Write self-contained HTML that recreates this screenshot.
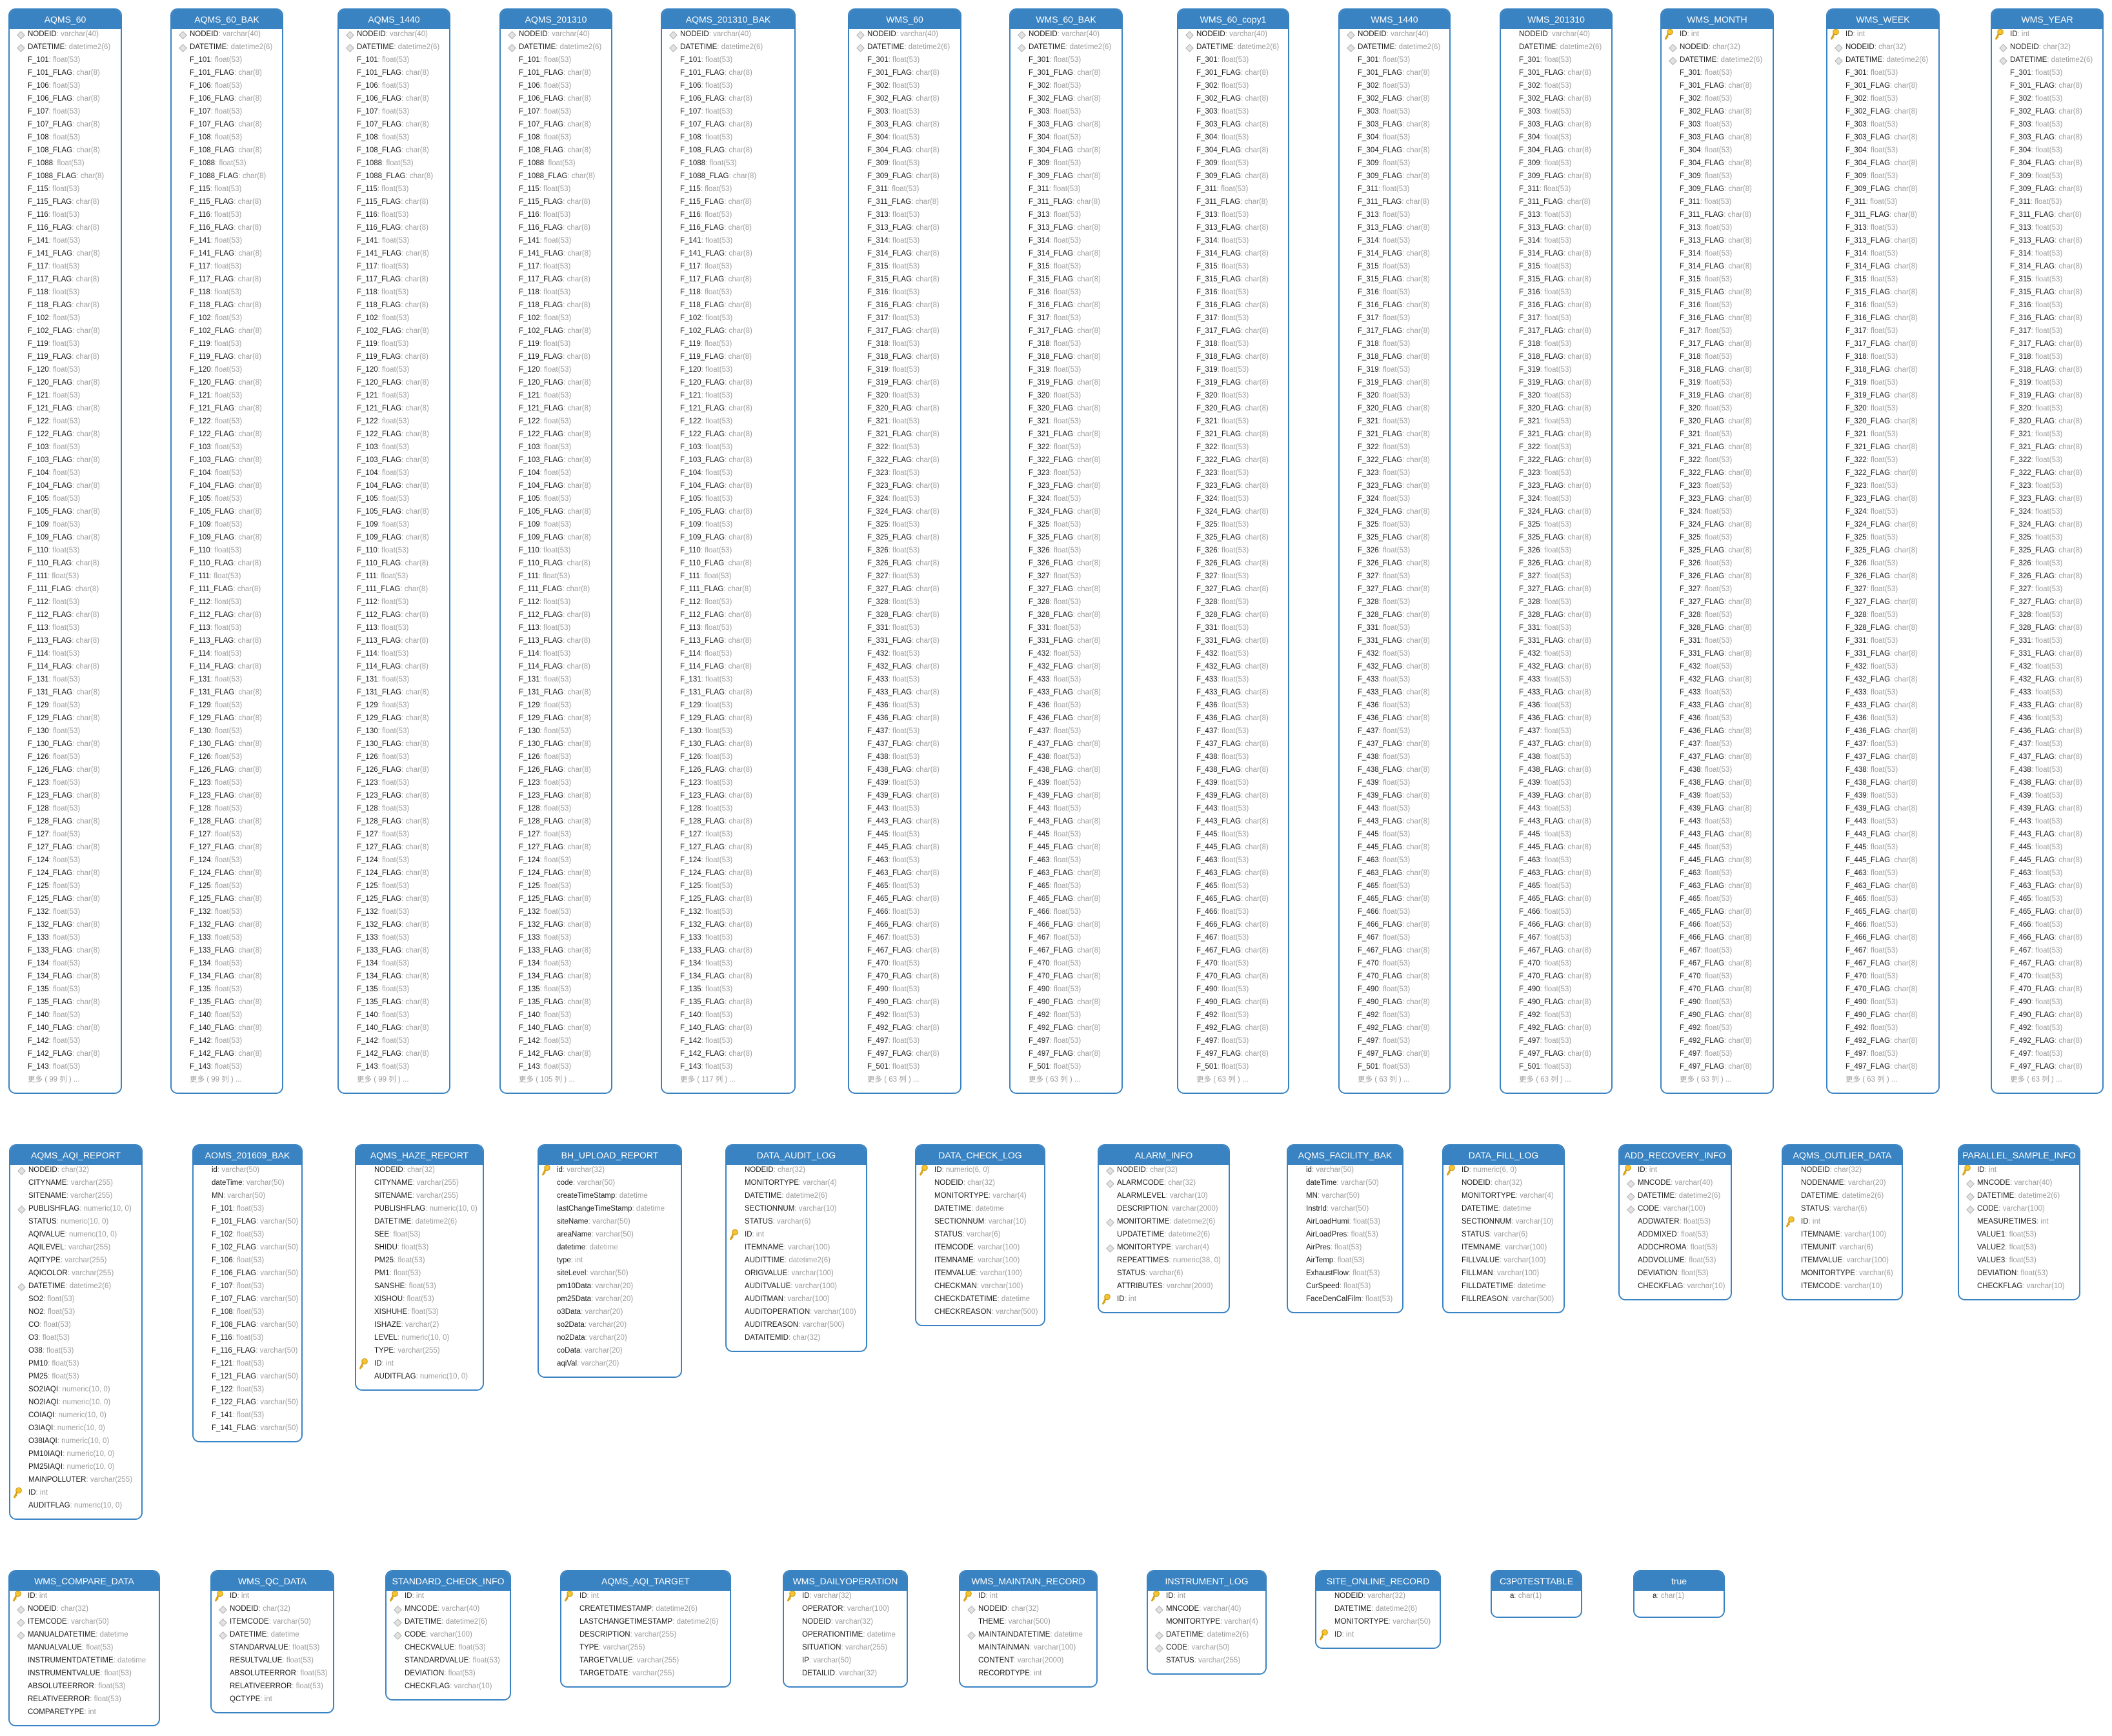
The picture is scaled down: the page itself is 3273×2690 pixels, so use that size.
<!DOCTYPE html>
<html><head><meta charset="utf-8"><style>
html,body{margin:0;padding:0;background:#fff;width:3273px;height:2690px;overflow:hidden;position:relative;font-family:"Liberation Sans","Noto Sans CJK SC",sans-serif}
.t{position:absolute;border:2px solid #3a83c2;border-radius:11px;background:#fff;overflow:hidden;box-sizing:border-box}
.h{height:30px;background:#3a83c2;color:#fff;font-size:14px;line-height:31px;text-align:center;white-space:nowrap}
.b{margin-top:-2px;padding-bottom:10px}
p{margin:0;height:20px;line-height:20px;padding-left:28px;white-space:nowrap;font-size:11.5px;color:#1a1a1a;position:relative}
em{font-style:normal;color:#9c9c9c}
p.m{color:#9c9c9c}
p.d::before{content:"";position:absolute;left:13px;top:7px;width:7px;height:7px;transform:rotate(45deg);border:1px solid #b0b0b0;background:#e2e2e2}
svg.k{position:absolute;left:4px;top:1px;width:14px;height:18px}
</style></head><body>

<div class="t" style="left:13px;top:13px;width:176px"><div class="h">AQMS_60</div><div class="b">
<p class=d>NODEID<em>: varchar(40)</em></p><p class=d>DATETIME<em>: datetime2(6)</em></p>
<p>F_101<em>: float(53)</em></p><p>F_101_FLAG<em>: char(8)</em></p><p>F_106<em>: float(53)</em></p><p>F_106_FLAG<em>: char(8)</em></p><p>F_107<em>: float(53)</em></p><p>F_107_FLAG<em>: char(8)</em></p><p>F_108<em>: float(53)</em></p><p>F_108_FLAG<em>: char(8)</em></p><p>F_1088<em>: float(53)</em></p><p>F_1088_FLAG<em>: char(8)</em></p><p>F_115<em>: float(53)</em></p><p>F_115_FLAG<em>: char(8)</em></p><p>F_116<em>: float(53)</em></p><p>F_116_FLAG<em>: char(8)</em></p><p>F_141<em>: float(53)</em></p><p>F_141_FLAG<em>: char(8)</em></p><p>F_117<em>: float(53)</em></p><p>F_117_FLAG<em>: char(8)</em></p><p>F_118<em>: float(53)</em></p><p>F_118_FLAG<em>: char(8)</em></p><p>F_102<em>: float(53)</em></p><p>F_102_FLAG<em>: char(8)</em></p><p>F_119<em>: float(53)</em></p><p>F_119_FLAG<em>: char(8)</em></p><p>F_120<em>: float(53)</em></p><p>F_120_FLAG<em>: char(8)</em></p><p>F_121<em>: float(53)</em></p><p>F_121_FLAG<em>: char(8)</em></p><p>F_122<em>: float(53)</em></p><p>F_122_FLAG<em>: char(8)</em></p><p>F_103<em>: float(53)</em></p><p>F_103_FLAG<em>: char(8)</em></p><p>F_104<em>: float(53)</em></p><p>F_104_FLAG<em>: char(8)</em></p><p>F_105<em>: float(53)</em></p><p>F_105_FLAG<em>: char(8)</em></p><p>F_109<em>: float(53)</em></p><p>F_109_FLAG<em>: char(8)</em></p><p>F_110<em>: float(53)</em></p><p>F_110_FLAG<em>: char(8)</em></p><p>F_111<em>: float(53)</em></p><p>F_111_FLAG<em>: char(8)</em></p><p>F_112<em>: float(53)</em></p><p>F_112_FLAG<em>: char(8)</em></p><p>F_113<em>: float(53)</em></p><p>F_113_FLAG<em>: char(8)</em></p><p>F_114<em>: float(53)</em></p><p>F_114_FLAG<em>: char(8)</em></p><p>F_131<em>: float(53)</em></p><p>F_131_FLAG<em>: char(8)</em></p><p>F_129<em>: float(53)</em></p><p>F_129_FLAG<em>: char(8)</em></p><p>F_130<em>: float(53)</em></p><p>F_130_FLAG<em>: char(8)</em></p><p>F_126<em>: float(53)</em></p><p>F_126_FLAG<em>: char(8)</em></p><p>F_123<em>: float(53)</em></p><p>F_123_FLAG<em>: char(8)</em></p><p>F_128<em>: float(53)</em></p><p>F_128_FLAG<em>: char(8)</em></p><p>F_127<em>: float(53)</em></p><p>F_127_FLAG<em>: char(8)</em></p><p>F_124<em>: float(53)</em></p><p>F_124_FLAG<em>: char(8)</em></p><p>F_125<em>: float(53)</em></p><p>F_125_FLAG<em>: char(8)</em></p><p>F_132<em>: float(53)</em></p><p>F_132_FLAG<em>: char(8)</em></p><p>F_133<em>: float(53)</em></p><p>F_133_FLAG<em>: char(8)</em></p><p>F_134<em>: float(53)</em></p><p>F_134_FLAG<em>: char(8)</em></p><p>F_135<em>: float(53)</em></p><p>F_135_FLAG<em>: char(8)</em></p><p>F_140<em>: float(53)</em></p><p>F_140_FLAG<em>: char(8)</em></p><p>F_142<em>: float(53)</em></p><p>F_142_FLAG<em>: char(8)</em></p><p>F_143<em>: float(53)</em></p>
<p class=m>更多 ( 99 列 ) ...</p></div></div>

<div class="t" style="left:264px;top:13px;width:175px"><div class="h">AQMS_60_BAK</div><div class="b">
<p class=d>NODEID<em>: varchar(40)</em></p><p class=d>DATETIME<em>: datetime2(6)</em></p>
<p>F_101<em>: float(53)</em></p><p>F_101_FLAG<em>: char(8)</em></p><p>F_106<em>: float(53)</em></p><p>F_106_FLAG<em>: char(8)</em></p><p>F_107<em>: float(53)</em></p><p>F_107_FLAG<em>: char(8)</em></p><p>F_108<em>: float(53)</em></p><p>F_108_FLAG<em>: char(8)</em></p><p>F_1088<em>: float(53)</em></p><p>F_1088_FLAG<em>: char(8)</em></p><p>F_115<em>: float(53)</em></p><p>F_115_FLAG<em>: char(8)</em></p><p>F_116<em>: float(53)</em></p><p>F_116_FLAG<em>: char(8)</em></p><p>F_141<em>: float(53)</em></p><p>F_141_FLAG<em>: char(8)</em></p><p>F_117<em>: float(53)</em></p><p>F_117_FLAG<em>: char(8)</em></p><p>F_118<em>: float(53)</em></p><p>F_118_FLAG<em>: char(8)</em></p><p>F_102<em>: float(53)</em></p><p>F_102_FLAG<em>: char(8)</em></p><p>F_119<em>: float(53)</em></p><p>F_119_FLAG<em>: char(8)</em></p><p>F_120<em>: float(53)</em></p><p>F_120_FLAG<em>: char(8)</em></p><p>F_121<em>: float(53)</em></p><p>F_121_FLAG<em>: char(8)</em></p><p>F_122<em>: float(53)</em></p><p>F_122_FLAG<em>: char(8)</em></p><p>F_103<em>: float(53)</em></p><p>F_103_FLAG<em>: char(8)</em></p><p>F_104<em>: float(53)</em></p><p>F_104_FLAG<em>: char(8)</em></p><p>F_105<em>: float(53)</em></p><p>F_105_FLAG<em>: char(8)</em></p><p>F_109<em>: float(53)</em></p><p>F_109_FLAG<em>: char(8)</em></p><p>F_110<em>: float(53)</em></p><p>F_110_FLAG<em>: char(8)</em></p><p>F_111<em>: float(53)</em></p><p>F_111_FLAG<em>: char(8)</em></p><p>F_112<em>: float(53)</em></p><p>F_112_FLAG<em>: char(8)</em></p><p>F_113<em>: float(53)</em></p><p>F_113_FLAG<em>: char(8)</em></p><p>F_114<em>: float(53)</em></p><p>F_114_FLAG<em>: char(8)</em></p><p>F_131<em>: float(53)</em></p><p>F_131_FLAG<em>: char(8)</em></p><p>F_129<em>: float(53)</em></p><p>F_129_FLAG<em>: char(8)</em></p><p>F_130<em>: float(53)</em></p><p>F_130_FLAG<em>: char(8)</em></p><p>F_126<em>: float(53)</em></p><p>F_126_FLAG<em>: char(8)</em></p><p>F_123<em>: float(53)</em></p><p>F_123_FLAG<em>: char(8)</em></p><p>F_128<em>: float(53)</em></p><p>F_128_FLAG<em>: char(8)</em></p><p>F_127<em>: float(53)</em></p><p>F_127_FLAG<em>: char(8)</em></p><p>F_124<em>: float(53)</em></p><p>F_124_FLAG<em>: char(8)</em></p><p>F_125<em>: float(53)</em></p><p>F_125_FLAG<em>: char(8)</em></p><p>F_132<em>: float(53)</em></p><p>F_132_FLAG<em>: char(8)</em></p><p>F_133<em>: float(53)</em></p><p>F_133_FLAG<em>: char(8)</em></p><p>F_134<em>: float(53)</em></p><p>F_134_FLAG<em>: char(8)</em></p><p>F_135<em>: float(53)</em></p><p>F_135_FLAG<em>: char(8)</em></p><p>F_140<em>: float(53)</em></p><p>F_140_FLAG<em>: char(8)</em></p><p>F_142<em>: float(53)</em></p><p>F_142_FLAG<em>: char(8)</em></p><p>F_143<em>: float(53)</em></p>
<p class=m>更多 ( 99 列 ) ...</p></div></div>

<div class="t" style="left:523px;top:13px;width:175px"><div class="h">AQMS_1440</div><div class="b">
<p class=d>NODEID<em>: varchar(40)</em></p><p class=d>DATETIME<em>: datetime2(6)</em></p>
<p>F_101<em>: float(53)</em></p><p>F_101_FLAG<em>: char(8)</em></p><p>F_106<em>: float(53)</em></p><p>F_106_FLAG<em>: char(8)</em></p><p>F_107<em>: float(53)</em></p><p>F_107_FLAG<em>: char(8)</em></p><p>F_108<em>: float(53)</em></p><p>F_108_FLAG<em>: char(8)</em></p><p>F_1088<em>: float(53)</em></p><p>F_1088_FLAG<em>: char(8)</em></p><p>F_115<em>: float(53)</em></p><p>F_115_FLAG<em>: char(8)</em></p><p>F_116<em>: float(53)</em></p><p>F_116_FLAG<em>: char(8)</em></p><p>F_141<em>: float(53)</em></p><p>F_141_FLAG<em>: char(8)</em></p><p>F_117<em>: float(53)</em></p><p>F_117_FLAG<em>: char(8)</em></p><p>F_118<em>: float(53)</em></p><p>F_118_FLAG<em>: char(8)</em></p><p>F_102<em>: float(53)</em></p><p>F_102_FLAG<em>: char(8)</em></p><p>F_119<em>: float(53)</em></p><p>F_119_FLAG<em>: char(8)</em></p><p>F_120<em>: float(53)</em></p><p>F_120_FLAG<em>: char(8)</em></p><p>F_121<em>: float(53)</em></p><p>F_121_FLAG<em>: char(8)</em></p><p>F_122<em>: float(53)</em></p><p>F_122_FLAG<em>: char(8)</em></p><p>F_103<em>: float(53)</em></p><p>F_103_FLAG<em>: char(8)</em></p><p>F_104<em>: float(53)</em></p><p>F_104_FLAG<em>: char(8)</em></p><p>F_105<em>: float(53)</em></p><p>F_105_FLAG<em>: char(8)</em></p><p>F_109<em>: float(53)</em></p><p>F_109_FLAG<em>: char(8)</em></p><p>F_110<em>: float(53)</em></p><p>F_110_FLAG<em>: char(8)</em></p><p>F_111<em>: float(53)</em></p><p>F_111_FLAG<em>: char(8)</em></p><p>F_112<em>: float(53)</em></p><p>F_112_FLAG<em>: char(8)</em></p><p>F_113<em>: float(53)</em></p><p>F_113_FLAG<em>: char(8)</em></p><p>F_114<em>: float(53)</em></p><p>F_114_FLAG<em>: char(8)</em></p><p>F_131<em>: float(53)</em></p><p>F_131_FLAG<em>: char(8)</em></p><p>F_129<em>: float(53)</em></p><p>F_129_FLAG<em>: char(8)</em></p><p>F_130<em>: float(53)</em></p><p>F_130_FLAG<em>: char(8)</em></p><p>F_126<em>: float(53)</em></p><p>F_126_FLAG<em>: char(8)</em></p><p>F_123<em>: float(53)</em></p><p>F_123_FLAG<em>: char(8)</em></p><p>F_128<em>: float(53)</em></p><p>F_128_FLAG<em>: char(8)</em></p><p>F_127<em>: float(53)</em></p><p>F_127_FLAG<em>: char(8)</em></p><p>F_124<em>: float(53)</em></p><p>F_124_FLAG<em>: char(8)</em></p><p>F_125<em>: float(53)</em></p><p>F_125_FLAG<em>: char(8)</em></p><p>F_132<em>: float(53)</em></p><p>F_132_FLAG<em>: char(8)</em></p><p>F_133<em>: float(53)</em></p><p>F_133_FLAG<em>: char(8)</em></p><p>F_134<em>: float(53)</em></p><p>F_134_FLAG<em>: char(8)</em></p><p>F_135<em>: float(53)</em></p><p>F_135_FLAG<em>: char(8)</em></p><p>F_140<em>: float(53)</em></p><p>F_140_FLAG<em>: char(8)</em></p><p>F_142<em>: float(53)</em></p><p>F_142_FLAG<em>: char(8)</em></p><p>F_143<em>: float(53)</em></p>
<p class=m>更多 ( 99 列 ) ...</p></div></div>

<div class="t" style="left:774px;top:13px;width:175px"><div class="h">AQMS_201310</div><div class="b">
<p class=d>NODEID<em>: varchar(40)</em></p><p class=d>DATETIME<em>: datetime2(6)</em></p>
<p>F_101<em>: float(53)</em></p><p>F_101_FLAG<em>: char(8)</em></p><p>F_106<em>: float(53)</em></p><p>F_106_FLAG<em>: char(8)</em></p><p>F_107<em>: float(53)</em></p><p>F_107_FLAG<em>: char(8)</em></p><p>F_108<em>: float(53)</em></p><p>F_108_FLAG<em>: char(8)</em></p><p>F_1088<em>: float(53)</em></p><p>F_1088_FLAG<em>: char(8)</em></p><p>F_115<em>: float(53)</em></p><p>F_115_FLAG<em>: char(8)</em></p><p>F_116<em>: float(53)</em></p><p>F_116_FLAG<em>: char(8)</em></p><p>F_141<em>: float(53)</em></p><p>F_141_FLAG<em>: char(8)</em></p><p>F_117<em>: float(53)</em></p><p>F_117_FLAG<em>: char(8)</em></p><p>F_118<em>: float(53)</em></p><p>F_118_FLAG<em>: char(8)</em></p><p>F_102<em>: float(53)</em></p><p>F_102_FLAG<em>: char(8)</em></p><p>F_119<em>: float(53)</em></p><p>F_119_FLAG<em>: char(8)</em></p><p>F_120<em>: float(53)</em></p><p>F_120_FLAG<em>: char(8)</em></p><p>F_121<em>: float(53)</em></p><p>F_121_FLAG<em>: char(8)</em></p><p>F_122<em>: float(53)</em></p><p>F_122_FLAG<em>: char(8)</em></p><p>F_103<em>: float(53)</em></p><p>F_103_FLAG<em>: char(8)</em></p><p>F_104<em>: float(53)</em></p><p>F_104_FLAG<em>: char(8)</em></p><p>F_105<em>: float(53)</em></p><p>F_105_FLAG<em>: char(8)</em></p><p>F_109<em>: float(53)</em></p><p>F_109_FLAG<em>: char(8)</em></p><p>F_110<em>: float(53)</em></p><p>F_110_FLAG<em>: char(8)</em></p><p>F_111<em>: float(53)</em></p><p>F_111_FLAG<em>: char(8)</em></p><p>F_112<em>: float(53)</em></p><p>F_112_FLAG<em>: char(8)</em></p><p>F_113<em>: float(53)</em></p><p>F_113_FLAG<em>: char(8)</em></p><p>F_114<em>: float(53)</em></p><p>F_114_FLAG<em>: char(8)</em></p><p>F_131<em>: float(53)</em></p><p>F_131_FLAG<em>: char(8)</em></p><p>F_129<em>: float(53)</em></p><p>F_129_FLAG<em>: char(8)</em></p><p>F_130<em>: float(53)</em></p><p>F_130_FLAG<em>: char(8)</em></p><p>F_126<em>: float(53)</em></p><p>F_126_FLAG<em>: char(8)</em></p><p>F_123<em>: float(53)</em></p><p>F_123_FLAG<em>: char(8)</em></p><p>F_128<em>: float(53)</em></p><p>F_128_FLAG<em>: char(8)</em></p><p>F_127<em>: float(53)</em></p><p>F_127_FLAG<em>: char(8)</em></p><p>F_124<em>: float(53)</em></p><p>F_124_FLAG<em>: char(8)</em></p><p>F_125<em>: float(53)</em></p><p>F_125_FLAG<em>: char(8)</em></p><p>F_132<em>: float(53)</em></p><p>F_132_FLAG<em>: char(8)</em></p><p>F_133<em>: float(53)</em></p><p>F_133_FLAG<em>: char(8)</em></p><p>F_134<em>: float(53)</em></p><p>F_134_FLAG<em>: char(8)</em></p><p>F_135<em>: float(53)</em></p><p>F_135_FLAG<em>: char(8)</em></p><p>F_140<em>: float(53)</em></p><p>F_140_FLAG<em>: char(8)</em></p><p>F_142<em>: float(53)</em></p><p>F_142_FLAG<em>: char(8)</em></p><p>F_143<em>: float(53)</em></p>
<p class=m>更多 ( 105 列 ) ...</p></div></div>

<div class="t" style="left:1024px;top:13px;width:209px"><div class="h">AQMS_201310_BAK</div><div class="b">
<p class=d>NODEID<em>: varchar(40)</em></p><p class=d>DATETIME<em>: datetime2(6)</em></p>
<p>F_101<em>: float(53)</em></p><p>F_101_FLAG<em>: char(8)</em></p><p>F_106<em>: float(53)</em></p><p>F_106_FLAG<em>: char(8)</em></p><p>F_107<em>: float(53)</em></p><p>F_107_FLAG<em>: char(8)</em></p><p>F_108<em>: float(53)</em></p><p>F_108_FLAG<em>: char(8)</em></p><p>F_1088<em>: float(53)</em></p><p>F_1088_FLAG<em>: char(8)</em></p><p>F_115<em>: float(53)</em></p><p>F_115_FLAG<em>: char(8)</em></p><p>F_116<em>: float(53)</em></p><p>F_116_FLAG<em>: char(8)</em></p><p>F_141<em>: float(53)</em></p><p>F_141_FLAG<em>: char(8)</em></p><p>F_117<em>: float(53)</em></p><p>F_117_FLAG<em>: char(8)</em></p><p>F_118<em>: float(53)</em></p><p>F_118_FLAG<em>: char(8)</em></p><p>F_102<em>: float(53)</em></p><p>F_102_FLAG<em>: char(8)</em></p><p>F_119<em>: float(53)</em></p><p>F_119_FLAG<em>: char(8)</em></p><p>F_120<em>: float(53)</em></p><p>F_120_FLAG<em>: char(8)</em></p><p>F_121<em>: float(53)</em></p><p>F_121_FLAG<em>: char(8)</em></p><p>F_122<em>: float(53)</em></p><p>F_122_FLAG<em>: char(8)</em></p><p>F_103<em>: float(53)</em></p><p>F_103_FLAG<em>: char(8)</em></p><p>F_104<em>: float(53)</em></p><p>F_104_FLAG<em>: char(8)</em></p><p>F_105<em>: float(53)</em></p><p>F_105_FLAG<em>: char(8)</em></p><p>F_109<em>: float(53)</em></p><p>F_109_FLAG<em>: char(8)</em></p><p>F_110<em>: float(53)</em></p><p>F_110_FLAG<em>: char(8)</em></p><p>F_111<em>: float(53)</em></p><p>F_111_FLAG<em>: char(8)</em></p><p>F_112<em>: float(53)</em></p><p>F_112_FLAG<em>: char(8)</em></p><p>F_113<em>: float(53)</em></p><p>F_113_FLAG<em>: char(8)</em></p><p>F_114<em>: float(53)</em></p><p>F_114_FLAG<em>: char(8)</em></p><p>F_131<em>: float(53)</em></p><p>F_131_FLAG<em>: char(8)</em></p><p>F_129<em>: float(53)</em></p><p>F_129_FLAG<em>: char(8)</em></p><p>F_130<em>: float(53)</em></p><p>F_130_FLAG<em>: char(8)</em></p><p>F_126<em>: float(53)</em></p><p>F_126_FLAG<em>: char(8)</em></p><p>F_123<em>: float(53)</em></p><p>F_123_FLAG<em>: char(8)</em></p><p>F_128<em>: float(53)</em></p><p>F_128_FLAG<em>: char(8)</em></p><p>F_127<em>: float(53)</em></p><p>F_127_FLAG<em>: char(8)</em></p><p>F_124<em>: float(53)</em></p><p>F_124_FLAG<em>: char(8)</em></p><p>F_125<em>: float(53)</em></p><p>F_125_FLAG<em>: char(8)</em></p><p>F_132<em>: float(53)</em></p><p>F_132_FLAG<em>: char(8)</em></p><p>F_133<em>: float(53)</em></p><p>F_133_FLAG<em>: char(8)</em></p><p>F_134<em>: float(53)</em></p><p>F_134_FLAG<em>: char(8)</em></p><p>F_135<em>: float(53)</em></p><p>F_135_FLAG<em>: char(8)</em></p><p>F_140<em>: float(53)</em></p><p>F_140_FLAG<em>: char(8)</em></p><p>F_142<em>: float(53)</em></p><p>F_142_FLAG<em>: char(8)</em></p><p>F_143<em>: float(53)</em></p>
<p class=m>更多 ( 117 列 ) ...</p></div></div>

<div class="t" style="left:1314px;top:13px;width:176px"><div class="h">WMS_60</div><div class="b">
<p class=d>NODEID<em>: varchar(40)</em></p><p class=d>DATETIME<em>: datetime2(6)</em></p>
<p>F_301<em>: float(53)</em></p><p>F_301_FLAG<em>: char(8)</em></p><p>F_302<em>: float(53)</em></p><p>F_302_FLAG<em>: char(8)</em></p><p>F_303<em>: float(53)</em></p><p>F_303_FLAG<em>: char(8)</em></p><p>F_304<em>: float(53)</em></p><p>F_304_FLAG<em>: char(8)</em></p><p>F_309<em>: float(53)</em></p><p>F_309_FLAG<em>: char(8)</em></p><p>F_311<em>: float(53)</em></p><p>F_311_FLAG<em>: char(8)</em></p><p>F_313<em>: float(53)</em></p><p>F_313_FLAG<em>: char(8)</em></p><p>F_314<em>: float(53)</em></p><p>F_314_FLAG<em>: char(8)</em></p><p>F_315<em>: float(53)</em></p><p>F_315_FLAG<em>: char(8)</em></p><p>F_316<em>: float(53)</em></p><p>F_316_FLAG<em>: char(8)</em></p><p>F_317<em>: float(53)</em></p><p>F_317_FLAG<em>: char(8)</em></p><p>F_318<em>: float(53)</em></p><p>F_318_FLAG<em>: char(8)</em></p><p>F_319<em>: float(53)</em></p><p>F_319_FLAG<em>: char(8)</em></p><p>F_320<em>: float(53)</em></p><p>F_320_FLAG<em>: char(8)</em></p><p>F_321<em>: float(53)</em></p><p>F_321_FLAG<em>: char(8)</em></p><p>F_322<em>: float(53)</em></p><p>F_322_FLAG<em>: char(8)</em></p><p>F_323<em>: float(53)</em></p><p>F_323_FLAG<em>: char(8)</em></p><p>F_324<em>: float(53)</em></p><p>F_324_FLAG<em>: char(8)</em></p><p>F_325<em>: float(53)</em></p><p>F_325_FLAG<em>: char(8)</em></p><p>F_326<em>: float(53)</em></p><p>F_326_FLAG<em>: char(8)</em></p><p>F_327<em>: float(53)</em></p><p>F_327_FLAG<em>: char(8)</em></p><p>F_328<em>: float(53)</em></p><p>F_328_FLAG<em>: char(8)</em></p><p>F_331<em>: float(53)</em></p><p>F_331_FLAG<em>: char(8)</em></p><p>F_432<em>: float(53)</em></p><p>F_432_FLAG<em>: char(8)</em></p><p>F_433<em>: float(53)</em></p><p>F_433_FLAG<em>: char(8)</em></p><p>F_436<em>: float(53)</em></p><p>F_436_FLAG<em>: char(8)</em></p><p>F_437<em>: float(53)</em></p><p>F_437_FLAG<em>: char(8)</em></p><p>F_438<em>: float(53)</em></p><p>F_438_FLAG<em>: char(8)</em></p><p>F_439<em>: float(53)</em></p><p>F_439_FLAG<em>: char(8)</em></p><p>F_443<em>: float(53)</em></p><p>F_443_FLAG<em>: char(8)</em></p><p>F_445<em>: float(53)</em></p><p>F_445_FLAG<em>: char(8)</em></p><p>F_463<em>: float(53)</em></p><p>F_463_FLAG<em>: char(8)</em></p><p>F_465<em>: float(53)</em></p><p>F_465_FLAG<em>: char(8)</em></p><p>F_466<em>: float(53)</em></p><p>F_466_FLAG<em>: char(8)</em></p><p>F_467<em>: float(53)</em></p><p>F_467_FLAG<em>: char(8)</em></p><p>F_470<em>: float(53)</em></p><p>F_470_FLAG<em>: char(8)</em></p><p>F_490<em>: float(53)</em></p><p>F_490_FLAG<em>: char(8)</em></p><p>F_492<em>: float(53)</em></p><p>F_492_FLAG<em>: char(8)</em></p><p>F_497<em>: float(53)</em></p><p>F_497_FLAG<em>: char(8)</em></p><p>F_501<em>: float(53)</em></p>
<p class=m>更多 ( 63 列 ) ...</p></div></div>

<div class="t" style="left:1564px;top:13px;width:176px"><div class="h">WMS_60_BAK</div><div class="b">
<p class=d>NODEID<em>: varchar(40)</em></p><p class=d>DATETIME<em>: datetime2(6)</em></p>
<p>F_301<em>: float(53)</em></p><p>F_301_FLAG<em>: char(8)</em></p><p>F_302<em>: float(53)</em></p><p>F_302_FLAG<em>: char(8)</em></p><p>F_303<em>: float(53)</em></p><p>F_303_FLAG<em>: char(8)</em></p><p>F_304<em>: float(53)</em></p><p>F_304_FLAG<em>: char(8)</em></p><p>F_309<em>: float(53)</em></p><p>F_309_FLAG<em>: char(8)</em></p><p>F_311<em>: float(53)</em></p><p>F_311_FLAG<em>: char(8)</em></p><p>F_313<em>: float(53)</em></p><p>F_313_FLAG<em>: char(8)</em></p><p>F_314<em>: float(53)</em></p><p>F_314_FLAG<em>: char(8)</em></p><p>F_315<em>: float(53)</em></p><p>F_315_FLAG<em>: char(8)</em></p><p>F_316<em>: float(53)</em></p><p>F_316_FLAG<em>: char(8)</em></p><p>F_317<em>: float(53)</em></p><p>F_317_FLAG<em>: char(8)</em></p><p>F_318<em>: float(53)</em></p><p>F_318_FLAG<em>: char(8)</em></p><p>F_319<em>: float(53)</em></p><p>F_319_FLAG<em>: char(8)</em></p><p>F_320<em>: float(53)</em></p><p>F_320_FLAG<em>: char(8)</em></p><p>F_321<em>: float(53)</em></p><p>F_321_FLAG<em>: char(8)</em></p><p>F_322<em>: float(53)</em></p><p>F_322_FLAG<em>: char(8)</em></p><p>F_323<em>: float(53)</em></p><p>F_323_FLAG<em>: char(8)</em></p><p>F_324<em>: float(53)</em></p><p>F_324_FLAG<em>: char(8)</em></p><p>F_325<em>: float(53)</em></p><p>F_325_FLAG<em>: char(8)</em></p><p>F_326<em>: float(53)</em></p><p>F_326_FLAG<em>: char(8)</em></p><p>F_327<em>: float(53)</em></p><p>F_327_FLAG<em>: char(8)</em></p><p>F_328<em>: float(53)</em></p><p>F_328_FLAG<em>: char(8)</em></p><p>F_331<em>: float(53)</em></p><p>F_331_FLAG<em>: char(8)</em></p><p>F_432<em>: float(53)</em></p><p>F_432_FLAG<em>: char(8)</em></p><p>F_433<em>: float(53)</em></p><p>F_433_FLAG<em>: char(8)</em></p><p>F_436<em>: float(53)</em></p><p>F_436_FLAG<em>: char(8)</em></p><p>F_437<em>: float(53)</em></p><p>F_437_FLAG<em>: char(8)</em></p><p>F_438<em>: float(53)</em></p><p>F_438_FLAG<em>: char(8)</em></p><p>F_439<em>: float(53)</em></p><p>F_439_FLAG<em>: char(8)</em></p><p>F_443<em>: float(53)</em></p><p>F_443_FLAG<em>: char(8)</em></p><p>F_445<em>: float(53)</em></p><p>F_445_FLAG<em>: char(8)</em></p><p>F_463<em>: float(53)</em></p><p>F_463_FLAG<em>: char(8)</em></p><p>F_465<em>: float(53)</em></p><p>F_465_FLAG<em>: char(8)</em></p><p>F_466<em>: float(53)</em></p><p>F_466_FLAG<em>: char(8)</em></p><p>F_467<em>: float(53)</em></p><p>F_467_FLAG<em>: char(8)</em></p><p>F_470<em>: float(53)</em></p><p>F_470_FLAG<em>: char(8)</em></p><p>F_490<em>: float(53)</em></p><p>F_490_FLAG<em>: char(8)</em></p><p>F_492<em>: float(53)</em></p><p>F_492_FLAG<em>: char(8)</em></p><p>F_497<em>: float(53)</em></p><p>F_497_FLAG<em>: char(8)</em></p><p>F_501<em>: float(53)</em></p>
<p class=m>更多 ( 63 列 ) ...</p></div></div>

<div class="t" style="left:1824px;top:13px;width:174px"><div class="h">WMS_60_copy1</div><div class="b">
<p class=d>NODEID<em>: varchar(40)</em></p><p class=d>DATETIME<em>: datetime2(6)</em></p>
<p>F_301<em>: float(53)</em></p><p>F_301_FLAG<em>: char(8)</em></p><p>F_302<em>: float(53)</em></p><p>F_302_FLAG<em>: char(8)</em></p><p>F_303<em>: float(53)</em></p><p>F_303_FLAG<em>: char(8)</em></p><p>F_304<em>: float(53)</em></p><p>F_304_FLAG<em>: char(8)</em></p><p>F_309<em>: float(53)</em></p><p>F_309_FLAG<em>: char(8)</em></p><p>F_311<em>: float(53)</em></p><p>F_311_FLAG<em>: char(8)</em></p><p>F_313<em>: float(53)</em></p><p>F_313_FLAG<em>: char(8)</em></p><p>F_314<em>: float(53)</em></p><p>F_314_FLAG<em>: char(8)</em></p><p>F_315<em>: float(53)</em></p><p>F_315_FLAG<em>: char(8)</em></p><p>F_316<em>: float(53)</em></p><p>F_316_FLAG<em>: char(8)</em></p><p>F_317<em>: float(53)</em></p><p>F_317_FLAG<em>: char(8)</em></p><p>F_318<em>: float(53)</em></p><p>F_318_FLAG<em>: char(8)</em></p><p>F_319<em>: float(53)</em></p><p>F_319_FLAG<em>: char(8)</em></p><p>F_320<em>: float(53)</em></p><p>F_320_FLAG<em>: char(8)</em></p><p>F_321<em>: float(53)</em></p><p>F_321_FLAG<em>: char(8)</em></p><p>F_322<em>: float(53)</em></p><p>F_322_FLAG<em>: char(8)</em></p><p>F_323<em>: float(53)</em></p><p>F_323_FLAG<em>: char(8)</em></p><p>F_324<em>: float(53)</em></p><p>F_324_FLAG<em>: char(8)</em></p><p>F_325<em>: float(53)</em></p><p>F_325_FLAG<em>: char(8)</em></p><p>F_326<em>: float(53)</em></p><p>F_326_FLAG<em>: char(8)</em></p><p>F_327<em>: float(53)</em></p><p>F_327_FLAG<em>: char(8)</em></p><p>F_328<em>: float(53)</em></p><p>F_328_FLAG<em>: char(8)</em></p><p>F_331<em>: float(53)</em></p><p>F_331_FLAG<em>: char(8)</em></p><p>F_432<em>: float(53)</em></p><p>F_432_FLAG<em>: char(8)</em></p><p>F_433<em>: float(53)</em></p><p>F_433_FLAG<em>: char(8)</em></p><p>F_436<em>: float(53)</em></p><p>F_436_FLAG<em>: char(8)</em></p><p>F_437<em>: float(53)</em></p><p>F_437_FLAG<em>: char(8)</em></p><p>F_438<em>: float(53)</em></p><p>F_438_FLAG<em>: char(8)</em></p><p>F_439<em>: float(53)</em></p><p>F_439_FLAG<em>: char(8)</em></p><p>F_443<em>: float(53)</em></p><p>F_443_FLAG<em>: char(8)</em></p><p>F_445<em>: float(53)</em></p><p>F_445_FLAG<em>: char(8)</em></p><p>F_463<em>: float(53)</em></p><p>F_463_FLAG<em>: char(8)</em></p><p>F_465<em>: float(53)</em></p><p>F_465_FLAG<em>: char(8)</em></p><p>F_466<em>: float(53)</em></p><p>F_466_FLAG<em>: char(8)</em></p><p>F_467<em>: float(53)</em></p><p>F_467_FLAG<em>: char(8)</em></p><p>F_470<em>: float(53)</em></p><p>F_470_FLAG<em>: char(8)</em></p><p>F_490<em>: float(53)</em></p><p>F_490_FLAG<em>: char(8)</em></p><p>F_492<em>: float(53)</em></p><p>F_492_FLAG<em>: char(8)</em></p><p>F_497<em>: float(53)</em></p><p>F_497_FLAG<em>: char(8)</em></p><p>F_501<em>: float(53)</em></p>
<p class=m>更多 ( 63 列 ) ...</p></div></div>

<div class="t" style="left:2074px;top:13px;width:174px"><div class="h">WMS_1440</div><div class="b">
<p class=d>NODEID<em>: varchar(40)</em></p><p class=d>DATETIME<em>: datetime2(6)</em></p>
<p>F_301<em>: float(53)</em></p><p>F_301_FLAG<em>: char(8)</em></p><p>F_302<em>: float(53)</em></p><p>F_302_FLAG<em>: char(8)</em></p><p>F_303<em>: float(53)</em></p><p>F_303_FLAG<em>: char(8)</em></p><p>F_304<em>: float(53)</em></p><p>F_304_FLAG<em>: char(8)</em></p><p>F_309<em>: float(53)</em></p><p>F_309_FLAG<em>: char(8)</em></p><p>F_311<em>: float(53)</em></p><p>F_311_FLAG<em>: char(8)</em></p><p>F_313<em>: float(53)</em></p><p>F_313_FLAG<em>: char(8)</em></p><p>F_314<em>: float(53)</em></p><p>F_314_FLAG<em>: char(8)</em></p><p>F_315<em>: float(53)</em></p><p>F_315_FLAG<em>: char(8)</em></p><p>F_316<em>: float(53)</em></p><p>F_316_FLAG<em>: char(8)</em></p><p>F_317<em>: float(53)</em></p><p>F_317_FLAG<em>: char(8)</em></p><p>F_318<em>: float(53)</em></p><p>F_318_FLAG<em>: char(8)</em></p><p>F_319<em>: float(53)</em></p><p>F_319_FLAG<em>: char(8)</em></p><p>F_320<em>: float(53)</em></p><p>F_320_FLAG<em>: char(8)</em></p><p>F_321<em>: float(53)</em></p><p>F_321_FLAG<em>: char(8)</em></p><p>F_322<em>: float(53)</em></p><p>F_322_FLAG<em>: char(8)</em></p><p>F_323<em>: float(53)</em></p><p>F_323_FLAG<em>: char(8)</em></p><p>F_324<em>: float(53)</em></p><p>F_324_FLAG<em>: char(8)</em></p><p>F_325<em>: float(53)</em></p><p>F_325_FLAG<em>: char(8)</em></p><p>F_326<em>: float(53)</em></p><p>F_326_FLAG<em>: char(8)</em></p><p>F_327<em>: float(53)</em></p><p>F_327_FLAG<em>: char(8)</em></p><p>F_328<em>: float(53)</em></p><p>F_328_FLAG<em>: char(8)</em></p><p>F_331<em>: float(53)</em></p><p>F_331_FLAG<em>: char(8)</em></p><p>F_432<em>: float(53)</em></p><p>F_432_FLAG<em>: char(8)</em></p><p>F_433<em>: float(53)</em></p><p>F_433_FLAG<em>: char(8)</em></p><p>F_436<em>: float(53)</em></p><p>F_436_FLAG<em>: char(8)</em></p><p>F_437<em>: float(53)</em></p><p>F_437_FLAG<em>: char(8)</em></p><p>F_438<em>: float(53)</em></p><p>F_438_FLAG<em>: char(8)</em></p><p>F_439<em>: float(53)</em></p><p>F_439_FLAG<em>: char(8)</em></p><p>F_443<em>: float(53)</em></p><p>F_443_FLAG<em>: char(8)</em></p><p>F_445<em>: float(53)</em></p><p>F_445_FLAG<em>: char(8)</em></p><p>F_463<em>: float(53)</em></p><p>F_463_FLAG<em>: char(8)</em></p><p>F_465<em>: float(53)</em></p><p>F_465_FLAG<em>: char(8)</em></p><p>F_466<em>: float(53)</em></p><p>F_466_FLAG<em>: char(8)</em></p><p>F_467<em>: float(53)</em></p><p>F_467_FLAG<em>: char(8)</em></p><p>F_470<em>: float(53)</em></p><p>F_470_FLAG<em>: char(8)</em></p><p>F_490<em>: float(53)</em></p><p>F_490_FLAG<em>: char(8)</em></p><p>F_492<em>: float(53)</em></p><p>F_492_FLAG<em>: char(8)</em></p><p>F_497<em>: float(53)</em></p><p>F_497_FLAG<em>: char(8)</em></p><p>F_501<em>: float(53)</em></p>
<p class=m>更多 ( 63 列 ) ...</p></div></div>

<div class="t" style="left:2324px;top:13px;width:175px"><div class="h">WMS_201310</div><div class="b">
<p>NODEID<em>: varchar(40)</em></p><p>DATETIME<em>: datetime2(6)</em></p>
<p>F_301<em>: float(53)</em></p><p>F_301_FLAG<em>: char(8)</em></p><p>F_302<em>: float(53)</em></p><p>F_302_FLAG<em>: char(8)</em></p><p>F_303<em>: float(53)</em></p><p>F_303_FLAG<em>: char(8)</em></p><p>F_304<em>: float(53)</em></p><p>F_304_FLAG<em>: char(8)</em></p><p>F_309<em>: float(53)</em></p><p>F_309_FLAG<em>: char(8)</em></p><p>F_311<em>: float(53)</em></p><p>F_311_FLAG<em>: char(8)</em></p><p>F_313<em>: float(53)</em></p><p>F_313_FLAG<em>: char(8)</em></p><p>F_314<em>: float(53)</em></p><p>F_314_FLAG<em>: char(8)</em></p><p>F_315<em>: float(53)</em></p><p>F_315_FLAG<em>: char(8)</em></p><p>F_316<em>: float(53)</em></p><p>F_316_FLAG<em>: char(8)</em></p><p>F_317<em>: float(53)</em></p><p>F_317_FLAG<em>: char(8)</em></p><p>F_318<em>: float(53)</em></p><p>F_318_FLAG<em>: char(8)</em></p><p>F_319<em>: float(53)</em></p><p>F_319_FLAG<em>: char(8)</em></p><p>F_320<em>: float(53)</em></p><p>F_320_FLAG<em>: char(8)</em></p><p>F_321<em>: float(53)</em></p><p>F_321_FLAG<em>: char(8)</em></p><p>F_322<em>: float(53)</em></p><p>F_322_FLAG<em>: char(8)</em></p><p>F_323<em>: float(53)</em></p><p>F_323_FLAG<em>: char(8)</em></p><p>F_324<em>: float(53)</em></p><p>F_324_FLAG<em>: char(8)</em></p><p>F_325<em>: float(53)</em></p><p>F_325_FLAG<em>: char(8)</em></p><p>F_326<em>: float(53)</em></p><p>F_326_FLAG<em>: char(8)</em></p><p>F_327<em>: float(53)</em></p><p>F_327_FLAG<em>: char(8)</em></p><p>F_328<em>: float(53)</em></p><p>F_328_FLAG<em>: char(8)</em></p><p>F_331<em>: float(53)</em></p><p>F_331_FLAG<em>: char(8)</em></p><p>F_432<em>: float(53)</em></p><p>F_432_FLAG<em>: char(8)</em></p><p>F_433<em>: float(53)</em></p><p>F_433_FLAG<em>: char(8)</em></p><p>F_436<em>: float(53)</em></p><p>F_436_FLAG<em>: char(8)</em></p><p>F_437<em>: float(53)</em></p><p>F_437_FLAG<em>: char(8)</em></p><p>F_438<em>: float(53)</em></p><p>F_438_FLAG<em>: char(8)</em></p><p>F_439<em>: float(53)</em></p><p>F_439_FLAG<em>: char(8)</em></p><p>F_443<em>: float(53)</em></p><p>F_443_FLAG<em>: char(8)</em></p><p>F_445<em>: float(53)</em></p><p>F_445_FLAG<em>: char(8)</em></p><p>F_463<em>: float(53)</em></p><p>F_463_FLAG<em>: char(8)</em></p><p>F_465<em>: float(53)</em></p><p>F_465_FLAG<em>: char(8)</em></p><p>F_466<em>: float(53)</em></p><p>F_466_FLAG<em>: char(8)</em></p><p>F_467<em>: float(53)</em></p><p>F_467_FLAG<em>: char(8)</em></p><p>F_470<em>: float(53)</em></p><p>F_470_FLAG<em>: char(8)</em></p><p>F_490<em>: float(53)</em></p><p>F_490_FLAG<em>: char(8)</em></p><p>F_492<em>: float(53)</em></p><p>F_492_FLAG<em>: char(8)</em></p><p>F_497<em>: float(53)</em></p><p>F_497_FLAG<em>: char(8)</em></p><p>F_501<em>: float(53)</em></p>
<p class=m>更多 ( 63 列 ) ...</p></div></div>

<div class="t" style="left:2573px;top:13px;width:176px"><div class="h">WMS_MONTH</div><div class="b">
<p><svg class=k viewBox="0 0 14 18"><path d="M6.5 8 L2.5 16" stroke="#d9a315" stroke-width="3" stroke-linecap="round"/><path d="M4 13 L6.5 14" stroke="#d9a315" stroke-width="1.5"/><circle cx="9" cy="5.5" r="4.3" fill="#f4c531" stroke="#c8920c" stroke-width="1"/></svg>ID<em>: int</em></p><p class=d>NODEID<em>: char(32)</em></p><p class=d>DATETIME<em>: datetime2(6)</em></p>
<p>F_301<em>: float(53)</em></p><p>F_301_FLAG<em>: char(8)</em></p><p>F_302<em>: float(53)</em></p><p>F_302_FLAG<em>: char(8)</em></p><p>F_303<em>: float(53)</em></p><p>F_303_FLAG<em>: char(8)</em></p><p>F_304<em>: float(53)</em></p><p>F_304_FLAG<em>: char(8)</em></p><p>F_309<em>: float(53)</em></p><p>F_309_FLAG<em>: char(8)</em></p><p>F_311<em>: float(53)</em></p><p>F_311_FLAG<em>: char(8)</em></p><p>F_313<em>: float(53)</em></p><p>F_313_FLAG<em>: char(8)</em></p><p>F_314<em>: float(53)</em></p><p>F_314_FLAG<em>: char(8)</em></p><p>F_315<em>: float(53)</em></p><p>F_315_FLAG<em>: char(8)</em></p><p>F_316<em>: float(53)</em></p><p>F_316_FLAG<em>: char(8)</em></p><p>F_317<em>: float(53)</em></p><p>F_317_FLAG<em>: char(8)</em></p><p>F_318<em>: float(53)</em></p><p>F_318_FLAG<em>: char(8)</em></p><p>F_319<em>: float(53)</em></p><p>F_319_FLAG<em>: char(8)</em></p><p>F_320<em>: float(53)</em></p><p>F_320_FLAG<em>: char(8)</em></p><p>F_321<em>: float(53)</em></p><p>F_321_FLAG<em>: char(8)</em></p><p>F_322<em>: float(53)</em></p><p>F_322_FLAG<em>: char(8)</em></p><p>F_323<em>: float(53)</em></p><p>F_323_FLAG<em>: char(8)</em></p><p>F_324<em>: float(53)</em></p><p>F_324_FLAG<em>: char(8)</em></p><p>F_325<em>: float(53)</em></p><p>F_325_FLAG<em>: char(8)</em></p><p>F_326<em>: float(53)</em></p><p>F_326_FLAG<em>: char(8)</em></p><p>F_327<em>: float(53)</em></p><p>F_327_FLAG<em>: char(8)</em></p><p>F_328<em>: float(53)</em></p><p>F_328_FLAG<em>: char(8)</em></p><p>F_331<em>: float(53)</em></p><p>F_331_FLAG<em>: char(8)</em></p><p>F_432<em>: float(53)</em></p><p>F_432_FLAG<em>: char(8)</em></p><p>F_433<em>: float(53)</em></p><p>F_433_FLAG<em>: char(8)</em></p><p>F_436<em>: float(53)</em></p><p>F_436_FLAG<em>: char(8)</em></p><p>F_437<em>: float(53)</em></p><p>F_437_FLAG<em>: char(8)</em></p><p>F_438<em>: float(53)</em></p><p>F_438_FLAG<em>: char(8)</em></p><p>F_439<em>: float(53)</em></p><p>F_439_FLAG<em>: char(8)</em></p><p>F_443<em>: float(53)</em></p><p>F_443_FLAG<em>: char(8)</em></p><p>F_445<em>: float(53)</em></p><p>F_445_FLAG<em>: char(8)</em></p><p>F_463<em>: float(53)</em></p><p>F_463_FLAG<em>: char(8)</em></p><p>F_465<em>: float(53)</em></p><p>F_465_FLAG<em>: char(8)</em></p><p>F_466<em>: float(53)</em></p><p>F_466_FLAG<em>: char(8)</em></p><p>F_467<em>: float(53)</em></p><p>F_467_FLAG<em>: char(8)</em></p><p>F_470<em>: float(53)</em></p><p>F_470_FLAG<em>: char(8)</em></p><p>F_490<em>: float(53)</em></p><p>F_490_FLAG<em>: char(8)</em></p><p>F_492<em>: float(53)</em></p><p>F_492_FLAG<em>: char(8)</em></p><p>F_497<em>: float(53)</em></p><p>F_497_FLAG<em>: char(8)</em></p>
<p class=m>更多 ( 63 列 ) ...</p></div></div>

<div class="t" style="left:2830px;top:13px;width:176px"><div class="h">WMS_WEEK</div><div class="b">
<p><svg class=k viewBox="0 0 14 18"><path d="M6.5 8 L2.5 16" stroke="#d9a315" stroke-width="3" stroke-linecap="round"/><path d="M4 13 L6.5 14" stroke="#d9a315" stroke-width="1.5"/><circle cx="9" cy="5.5" r="4.3" fill="#f4c531" stroke="#c8920c" stroke-width="1"/></svg>ID<em>: int</em></p><p class=d>NODEID<em>: char(32)</em></p><p class=d>DATETIME<em>: datetime2(6)</em></p>
<p>F_301<em>: float(53)</em></p><p>F_301_FLAG<em>: char(8)</em></p><p>F_302<em>: float(53)</em></p><p>F_302_FLAG<em>: char(8)</em></p><p>F_303<em>: float(53)</em></p><p>F_303_FLAG<em>: char(8)</em></p><p>F_304<em>: float(53)</em></p><p>F_304_FLAG<em>: char(8)</em></p><p>F_309<em>: float(53)</em></p><p>F_309_FLAG<em>: char(8)</em></p><p>F_311<em>: float(53)</em></p><p>F_311_FLAG<em>: char(8)</em></p><p>F_313<em>: float(53)</em></p><p>F_313_FLAG<em>: char(8)</em></p><p>F_314<em>: float(53)</em></p><p>F_314_FLAG<em>: char(8)</em></p><p>F_315<em>: float(53)</em></p><p>F_315_FLAG<em>: char(8)</em></p><p>F_316<em>: float(53)</em></p><p>F_316_FLAG<em>: char(8)</em></p><p>F_317<em>: float(53)</em></p><p>F_317_FLAG<em>: char(8)</em></p><p>F_318<em>: float(53)</em></p><p>F_318_FLAG<em>: char(8)</em></p><p>F_319<em>: float(53)</em></p><p>F_319_FLAG<em>: char(8)</em></p><p>F_320<em>: float(53)</em></p><p>F_320_FLAG<em>: char(8)</em></p><p>F_321<em>: float(53)</em></p><p>F_321_FLAG<em>: char(8)</em></p><p>F_322<em>: float(53)</em></p><p>F_322_FLAG<em>: char(8)</em></p><p>F_323<em>: float(53)</em></p><p>F_323_FLAG<em>: char(8)</em></p><p>F_324<em>: float(53)</em></p><p>F_324_FLAG<em>: char(8)</em></p><p>F_325<em>: float(53)</em></p><p>F_325_FLAG<em>: char(8)</em></p><p>F_326<em>: float(53)</em></p><p>F_326_FLAG<em>: char(8)</em></p><p>F_327<em>: float(53)</em></p><p>F_327_FLAG<em>: char(8)</em></p><p>F_328<em>: float(53)</em></p><p>F_328_FLAG<em>: char(8)</em></p><p>F_331<em>: float(53)</em></p><p>F_331_FLAG<em>: char(8)</em></p><p>F_432<em>: float(53)</em></p><p>F_432_FLAG<em>: char(8)</em></p><p>F_433<em>: float(53)</em></p><p>F_433_FLAG<em>: char(8)</em></p><p>F_436<em>: float(53)</em></p><p>F_436_FLAG<em>: char(8)</em></p><p>F_437<em>: float(53)</em></p><p>F_437_FLAG<em>: char(8)</em></p><p>F_438<em>: float(53)</em></p><p>F_438_FLAG<em>: char(8)</em></p><p>F_439<em>: float(53)</em></p><p>F_439_FLAG<em>: char(8)</em></p><p>F_443<em>: float(53)</em></p><p>F_443_FLAG<em>: char(8)</em></p><p>F_445<em>: float(53)</em></p><p>F_445_FLAG<em>: char(8)</em></p><p>F_463<em>: float(53)</em></p><p>F_463_FLAG<em>: char(8)</em></p><p>F_465<em>: float(53)</em></p><p>F_465_FLAG<em>: char(8)</em></p><p>F_466<em>: float(53)</em></p><p>F_466_FLAG<em>: char(8)</em></p><p>F_467<em>: float(53)</em></p><p>F_467_FLAG<em>: char(8)</em></p><p>F_470<em>: float(53)</em></p><p>F_470_FLAG<em>: char(8)</em></p><p>F_490<em>: float(53)</em></p><p>F_490_FLAG<em>: char(8)</em></p><p>F_492<em>: float(53)</em></p><p>F_492_FLAG<em>: char(8)</em></p><p>F_497<em>: float(53)</em></p><p>F_497_FLAG<em>: char(8)</em></p>
<p class=m>更多 ( 63 列 ) ...</p></div></div>

<div class="t" style="left:3085px;top:13px;width:175px"><div class="h">WMS_YEAR</div><div class="b">
<p><svg class=k viewBox="0 0 14 18"><path d="M6.5 8 L2.5 16" stroke="#d9a315" stroke-width="3" stroke-linecap="round"/><path d="M4 13 L6.5 14" stroke="#d9a315" stroke-width="1.5"/><circle cx="9" cy="5.5" r="4.3" fill="#f4c531" stroke="#c8920c" stroke-width="1"/></svg>ID<em>: int</em></p><p class=d>NODEID<em>: char(32)</em></p><p class=d>DATETIME<em>: datetime2(6)</em></p>
<p>F_301<em>: float(53)</em></p><p>F_301_FLAG<em>: char(8)</em></p><p>F_302<em>: float(53)</em></p><p>F_302_FLAG<em>: char(8)</em></p><p>F_303<em>: float(53)</em></p><p>F_303_FLAG<em>: char(8)</em></p><p>F_304<em>: float(53)</em></p><p>F_304_FLAG<em>: char(8)</em></p><p>F_309<em>: float(53)</em></p><p>F_309_FLAG<em>: char(8)</em></p><p>F_311<em>: float(53)</em></p><p>F_311_FLAG<em>: char(8)</em></p><p>F_313<em>: float(53)</em></p><p>F_313_FLAG<em>: char(8)</em></p><p>F_314<em>: float(53)</em></p><p>F_314_FLAG<em>: char(8)</em></p><p>F_315<em>: float(53)</em></p><p>F_315_FLAG<em>: char(8)</em></p><p>F_316<em>: float(53)</em></p><p>F_316_FLAG<em>: char(8)</em></p><p>F_317<em>: float(53)</em></p><p>F_317_FLAG<em>: char(8)</em></p><p>F_318<em>: float(53)</em></p><p>F_318_FLAG<em>: char(8)</em></p><p>F_319<em>: float(53)</em></p><p>F_319_FLAG<em>: char(8)</em></p><p>F_320<em>: float(53)</em></p><p>F_320_FLAG<em>: char(8)</em></p><p>F_321<em>: float(53)</em></p><p>F_321_FLAG<em>: char(8)</em></p><p>F_322<em>: float(53)</em></p><p>F_322_FLAG<em>: char(8)</em></p><p>F_323<em>: float(53)</em></p><p>F_323_FLAG<em>: char(8)</em></p><p>F_324<em>: float(53)</em></p><p>F_324_FLAG<em>: char(8)</em></p><p>F_325<em>: float(53)</em></p><p>F_325_FLAG<em>: char(8)</em></p><p>F_326<em>: float(53)</em></p><p>F_326_FLAG<em>: char(8)</em></p><p>F_327<em>: float(53)</em></p><p>F_327_FLAG<em>: char(8)</em></p><p>F_328<em>: float(53)</em></p><p>F_328_FLAG<em>: char(8)</em></p><p>F_331<em>: float(53)</em></p><p>F_331_FLAG<em>: char(8)</em></p><p>F_432<em>: float(53)</em></p><p>F_432_FLAG<em>: char(8)</em></p><p>F_433<em>: float(53)</em></p><p>F_433_FLAG<em>: char(8)</em></p><p>F_436<em>: float(53)</em></p><p>F_436_FLAG<em>: char(8)</em></p><p>F_437<em>: float(53)</em></p><p>F_437_FLAG<em>: char(8)</em></p><p>F_438<em>: float(53)</em></p><p>F_438_FLAG<em>: char(8)</em></p><p>F_439<em>: float(53)</em></p><p>F_439_FLAG<em>: char(8)</em></p><p>F_443<em>: float(53)</em></p><p>F_443_FLAG<em>: char(8)</em></p><p>F_445<em>: float(53)</em></p><p>F_445_FLAG<em>: char(8)</em></p><p>F_463<em>: float(53)</em></p><p>F_463_FLAG<em>: char(8)</em></p><p>F_465<em>: float(53)</em></p><p>F_465_FLAG<em>: char(8)</em></p><p>F_466<em>: float(53)</em></p><p>F_466_FLAG<em>: char(8)</em></p><p>F_467<em>: float(53)</em></p><p>F_467_FLAG<em>: char(8)</em></p><p>F_470<em>: float(53)</em></p><p>F_470_FLAG<em>: char(8)</em></p><p>F_490<em>: float(53)</em></p><p>F_490_FLAG<em>: char(8)</em></p><p>F_492<em>: float(53)</em></p><p>F_492_FLAG<em>: char(8)</em></p><p>F_497<em>: float(53)</em></p><p>F_497_FLAG<em>: char(8)</em></p>
<p class=m>更多 ( 63 列 ) ...</p></div></div>

<!-- ROW 2 -->
<div class="t" style="left:14px;top:1773px;width:207px"><div class="h">AQMS_AQI_REPORT</div><div class="b">
<p class=d>NODEID<em>: char(32)</em></p><p>CITYNAME<em>: varchar(255)</em></p><p>SITENAME<em>: varchar(255)</em></p><p class=d>PUBLISHFLAG<em>: numeric(10, 0)</em></p><p>STATUS<em>: numeric(10, 0)</em></p><p>AQIVALUE<em>: numeric(10, 0)</em></p><p>AQILEVEL<em>: varchar(255)</em></p><p>AQITYPE<em>: varchar(255)</em></p><p>AQICOLOR<em>: varchar(255)</em></p><p class=d>DATETIME<em>: datetime2(6)</em></p><p>SO2<em>: float(53)</em></p><p>NO2<em>: float(53)</em></p><p>CO<em>: float(53)</em></p><p>O3<em>: float(53)</em></p><p>O38<em>: float(53)</em></p><p>PM10<em>: float(53)</em></p><p>PM25<em>: float(53)</em></p><p>SO2IAQI<em>: numeric(10, 0)</em></p><p>NO2IAQI<em>: numeric(10, 0)</em></p><p>COIAQI<em>: numeric(10, 0)</em></p><p>O3IAQI<em>: numeric(10, 0)</em></p><p>O38IAQI<em>: numeric(10, 0)</em></p><p>PM10IAQI<em>: numeric(10, 0)</em></p><p>PM25IAQI<em>: numeric(10, 0)</em></p><p>MAINPOLLUTER<em>: varchar(255)</em></p><p><svg class=k viewBox="0 0 14 18"><path d="M6.5 8 L2.5 16" stroke="#d9a315" stroke-width="3" stroke-linecap="round"/><path d="M4 13 L6.5 14" stroke="#d9a315" stroke-width="1.5"/><circle cx="9" cy="5.5" r="4.3" fill="#f4c531" stroke="#c8920c" stroke-width="1"/></svg>ID<em>: int</em></p><p>AUDITFLAG<em>: numeric(10, 0)</em></p>
</div></div>

<div class="t" style="left:298px;top:1773px;width:171px"><div class="h">AOMS_201609_BAK</div><div class="b">
<p>id<em>: varchar(50)</em></p><p>dateTime<em>: varchar(50)</em></p><p>MN<em>: varchar(50)</em></p><p>F_101<em>: float(53)</em></p><p>F_101_FLAG<em>: varchar(50)</em></p><p>F_102<em>: float(53)</em></p><p>F_102_FLAG<em>: varchar(50)</em></p><p>F_106<em>: float(53)</em></p><p>F_106_FLAG<em>: varchar(50)</em></p><p>F_107<em>: float(53)</em></p><p>F_107_FLAG<em>: varchar(50)</em></p><p>F_108<em>: float(53)</em></p><p>F_108_FLAG<em>: varchar(50)</em></p><p>F_116<em>: float(53)</em></p><p>F_116_FLAG<em>: varchar(50)</em></p><p>F_121<em>: float(53)</em></p><p>F_121_FLAG<em>: varchar(50)</em></p><p>F_122<em>: float(53)</em></p><p>F_122_FLAG<em>: varchar(50)</em></p><p>F_141<em>: float(53)</em></p><p>F_141_FLAG<em>: varchar(50)</em></p>
</div></div>

<div class="t" style="left:550px;top:1773px;width:200px"><div class="h">AQMS_HAZE_REPORT</div><div class="b">
<p>NODEID<em>: char(32)</em></p><p>CITYNAME<em>: varchar(255)</em></p><p>SITENAME<em>: varchar(255)</em></p><p>PUBLISHFLAG<em>: numeric(10, 0)</em></p><p>DATETIME<em>: datetime2(6)</em></p><p>SEE<em>: float(53)</em></p><p>SHIDU<em>: float(53)</em></p><p>PM25<em>: float(53)</em></p><p>PM1<em>: float(53)</em></p><p>SANSHE<em>: float(53)</em></p><p>XISHOU<em>: float(53)</em></p><p>XISHUHE<em>: float(53)</em></p><p>ISHAZE<em>: varchar(2)</em></p><p>LEVEL<em>: numeric(10, 0)</em></p><p>TYPE<em>: varchar(255)</em></p><p><svg class=k viewBox="0 0 14 18"><path d="M6.5 8 L2.5 16" stroke="#d9a315" stroke-width="3" stroke-linecap="round"/><path d="M4 13 L6.5 14" stroke="#d9a315" stroke-width="1.5"/><circle cx="9" cy="5.5" r="4.3" fill="#f4c531" stroke="#c8920c" stroke-width="1"/></svg>ID<em>: int</em></p><p>AUDITFLAG<em>: numeric(10, 0)</em></p>
</div></div>

<div class="t" style="left:833px;top:1773px;width:224px"><div class="h">BH_UPLOAD_REPORT</div><div class="b">
<p><svg class=k viewBox="0 0 14 18"><path d="M6.5 8 L2.5 16" stroke="#d9a315" stroke-width="3" stroke-linecap="round"/><path d="M4 13 L6.5 14" stroke="#d9a315" stroke-width="1.5"/><circle cx="9" cy="5.5" r="4.3" fill="#f4c531" stroke="#c8920c" stroke-width="1"/></svg>id<em>: varchar(32)</em></p><p>code<em>: varchar(50)</em></p><p>createTimeStamp<em>: datetime</em></p><p>lastChangeTimeStamp<em>: datetime</em></p><p>siteName<em>: varchar(50)</em></p><p>areaName<em>: varchar(50)</em></p><p>datetime<em>: datetime</em></p><p>type<em>: int</em></p><p>siteLevel<em>: varchar(50)</em></p><p>pm10Data<em>: varchar(20)</em></p><p>pm25Data<em>: varchar(20)</em></p><p>o3Data<em>: varchar(20)</em></p><p>so2Data<em>: varchar(20)</em></p><p>no2Data<em>: varchar(20)</em></p><p>coData<em>: varchar(20)</em></p><p>aqiVal<em>: varchar(20)</em></p>
</div></div>

<div class="t" style="left:1124px;top:1773px;width:220px"><div class="h">DATA_AUDIT_LOG</div><div class="b">
<p>NODEID<em>: char(32)</em></p><p>MONITORTYPE<em>: varchar(4)</em></p><p>DATETIME<em>: datetime2(6)</em></p><p>SECTIONNUM<em>: varchar(10)</em></p><p>STATUS<em>: varchar(6)</em></p><p><svg class=k viewBox="0 0 14 18"><path d="M6.5 8 L2.5 16" stroke="#d9a315" stroke-width="3" stroke-linecap="round"/><path d="M4 13 L6.5 14" stroke="#d9a315" stroke-width="1.5"/><circle cx="9" cy="5.5" r="4.3" fill="#f4c531" stroke="#c8920c" stroke-width="1"/></svg>ID<em>: int</em></p><p>ITEMNAME<em>: varchar(100)</em></p><p>AUDITTIME<em>: datetime2(6)</em></p><p>ORIGVALUE<em>: varchar(100)</em></p><p>AUDITVALUE<em>: varchar(100)</em></p><p>AUDITMAN<em>: varchar(100)</em></p><p>AUDITOPERATION<em>: varchar(100)</em></p><p>AUDITREASON<em>: varchar(500)</em></p><p>DATAITEMID<em>: char(32)</em></p>
</div></div>

<div class="t" style="left:1418px;top:1773px;width:202px"><div class="h">DATA_CHECK_LOG</div><div class="b">
<p><svg class=k viewBox="0 0 14 18"><path d="M6.5 8 L2.5 16" stroke="#d9a315" stroke-width="3" stroke-linecap="round"/><path d="M4 13 L6.5 14" stroke="#d9a315" stroke-width="1.5"/><circle cx="9" cy="5.5" r="4.3" fill="#f4c531" stroke="#c8920c" stroke-width="1"/></svg>ID<em>: numeric(6, 0)</em></p><p>NODEID<em>: char(32)</em></p><p>MONITORTYPE<em>: varchar(4)</em></p><p>DATETIME<em>: datetime</em></p><p>SECTIONNUM<em>: varchar(10)</em></p><p>STATUS<em>: varchar(6)</em></p><p>ITEMCODE<em>: varchar(100)</em></p><p>ITEMNAME<em>: varchar(100)</em></p><p>ITEMVALUE<em>: varchar(100)</em></p><p>CHECKMAN<em>: varchar(100)</em></p><p>CHECKDATETIME<em>: datetime</em></p><p>CHECKREASON<em>: varchar(500)</em></p>
</div></div>

<div class="t" style="left:1701px;top:1773px;width:205px"><div class="h">ALARM_INFO</div><div class="b">
<p class=d>NODEID<em>: char(32)</em></p><p class=d>ALARMCODE<em>: char(32)</em></p><p>ALARMLEVEL<em>: varchar(10)</em></p><p>DESCRIPTION<em>: varchar(2000)</em></p><p class=d>MONITORTIME<em>: datetime2(6)</em></p><p>UPDATETIME<em>: datetime2(6)</em></p><p class=d>MONITORTYPE<em>: varchar(4)</em></p><p>REPEATTIMES<em>: numeric(38, 0)</em></p><p>STATUS<em>: varchar(6)</em></p><p>ATTRIBUTES<em>: varchar(2000)</em></p><p><svg class=k viewBox="0 0 14 18"><path d="M6.5 8 L2.5 16" stroke="#d9a315" stroke-width="3" stroke-linecap="round"/><path d="M4 13 L6.5 14" stroke="#d9a315" stroke-width="1.5"/><circle cx="9" cy="5.5" r="4.3" fill="#f4c531" stroke="#c8920c" stroke-width="1"/></svg>ID<em>: int</em></p>
</div></div>

<div class="t" style="left:1994px;top:1773px;width:181px"><div class="h">AQMS_FACILITY_BAK</div><div class="b">
<p>id<em>: varchar(50)</em></p><p>dateTime<em>: varchar(50)</em></p><p>MN<em>: varchar(50)</em></p><p>InstrId<em>: varchar(50)</em></p><p>AirLoadHumi<em>: float(53)</em></p><p>AirLoadPres<em>: float(53)</em></p><p>AirPres<em>: float(53)</em></p><p>AirTemp<em>: float(53)</em></p><p>ExhaustFlow<em>: float(53)</em></p><p>CurSpeed<em>: float(53)</em></p><p>FaceDenCalFilm<em>: float(53)</em></p>
</div></div>

<div class="t" style="left:2235px;top:1773px;width:190px"><div class="h">DATA_FILL_LOG</div><div class="b">
<p><svg class=k viewBox="0 0 14 18"><path d="M6.5 8 L2.5 16" stroke="#d9a315" stroke-width="3" stroke-linecap="round"/><path d="M4 13 L6.5 14" stroke="#d9a315" stroke-width="1.5"/><circle cx="9" cy="5.5" r="4.3" fill="#f4c531" stroke="#c8920c" stroke-width="1"/></svg>ID<em>: numeric(6, 0)</em></p><p>NODEID<em>: char(32)</em></p><p>MONITORTYPE<em>: varchar(4)</em></p><p>DATETIME<em>: datetime</em></p><p>SECTIONNUM<em>: varchar(10)</em></p><p>STATUS<em>: varchar(6)</em></p><p>ITEMNAME<em>: varchar(100)</em></p><p>FILLVALUE<em>: varchar(100)</em></p><p>FILLMAN<em>: varchar(100)</em></p><p>FILLDATETIME<em>: datetime</em></p><p>FILLREASON<em>: varchar(500)</em></p>
</div></div>

<div class="t" style="left:2508px;top:1773px;width:176px"><div class="h">ADD_RECOVERY_INFO</div><div class="b">
<p><svg class=k viewBox="0 0 14 18"><path d="M6.5 8 L2.5 16" stroke="#d9a315" stroke-width="3" stroke-linecap="round"/><path d="M4 13 L6.5 14" stroke="#d9a315" stroke-width="1.5"/><circle cx="9" cy="5.5" r="4.3" fill="#f4c531" stroke="#c8920c" stroke-width="1"/></svg>ID<em>: int</em></p><p class=d>MNCODE<em>: varchar(40)</em></p><p class=d>DATETIME<em>: datetime2(6)</em></p><p class=d>CODE<em>: varchar(100)</em></p><p>ADDWATER<em>: float(53)</em></p><p>ADDMIXED<em>: float(53)</em></p><p>ADDCHROMA<em>: float(53)</em></p><p>ADDVOLUME<em>: float(53)</em></p><p>DEVIATION<em>: float(53)</em></p><p>CHECKFLAG<em>: varchar(10)</em></p>
</div></div>

<div class="t" style="left:2761px;top:1773px;width:188px"><div class="h">AQMS_OUTLIER_DATA</div><div class="b">
<p>NODEID<em>: char(32)</em></p><p>NODENAME<em>: varchar(20)</em></p><p>DATETIME<em>: datetime2(6)</em></p><p>STATUS<em>: varchar(6)</em></p><p><svg class=k viewBox="0 0 14 18"><path d="M6.5 8 L2.5 16" stroke="#d9a315" stroke-width="3" stroke-linecap="round"/><path d="M4 13 L6.5 14" stroke="#d9a315" stroke-width="1.5"/><circle cx="9" cy="5.5" r="4.3" fill="#f4c531" stroke="#c8920c" stroke-width="1"/></svg>ID<em>: int</em></p><p>ITEMNAME<em>: varchar(100)</em></p><p>ITEMUNIT<em>: varchar(6)</em></p><p>ITEMVALUE<em>: varchar(100)</em></p><p>MONITORTYPE<em>: varchar(6)</em></p><p>ITEMCODE<em>: varchar(10)</em></p>
</div></div>

<div class="t" style="left:3034px;top:1773px;width:190px"><div class="h">PARALLEL_SAMPLE_INFO</div><div class="b">
<p><svg class=k viewBox="0 0 14 18"><path d="M6.5 8 L2.5 16" stroke="#d9a315" stroke-width="3" stroke-linecap="round"/><path d="M4 13 L6.5 14" stroke="#d9a315" stroke-width="1.5"/><circle cx="9" cy="5.5" r="4.3" fill="#f4c531" stroke="#c8920c" stroke-width="1"/></svg>ID<em>: int</em></p><p class=d>MNCODE<em>: varchar(40)</em></p><p class=d>DATETIME<em>: datetime2(6)</em></p><p class=d>CODE<em>: varchar(100)</em></p><p>MEASURETIMES<em>: int</em></p><p>VALUE1<em>: float(53)</em></p><p>VALUE2<em>: float(53)</em></p><p>VALUE3<em>: float(53)</em></p><p>DEVIATION<em>: float(53)</em></p><p>CHECKFLAG<em>: varchar(10)</em></p>
</div></div>

<!-- ROW 3 -->
<div class="t" style="left:13px;top:2433px;width:235px"><div class="h">WMS_COMPARE_DATA</div><div class="b">
<p><svg class=k viewBox="0 0 14 18"><path d="M6.5 8 L2.5 16" stroke="#d9a315" stroke-width="3" stroke-linecap="round"/><path d="M4 13 L6.5 14" stroke="#d9a315" stroke-width="1.5"/><circle cx="9" cy="5.5" r="4.3" fill="#f4c531" stroke="#c8920c" stroke-width="1"/></svg>ID<em>: int</em></p><p class=d>NODEID<em>: char(32)</em></p><p class=d>ITEMCODE<em>: varchar(50)</em></p><p class=d>MANUALDATETIME<em>: datetime</em></p><p>MANUALVALUE<em>: float(53)</em></p><p>INSTRUMENTDATETIME<em>: datetime</em></p><p>INSTRUMENTVALUE<em>: float(53)</em></p><p>ABSOLUTEERROR<em>: float(53)</em></p><p>RELATIVEERROR<em>: float(53)</em></p><p>COMPARETYPE<em>: int</em></p>
</div></div>

<div class="t" style="left:326px;top:2433px;width:192px"><div class="h">WMS_QC_DATA</div><div class="b">
<p><svg class=k viewBox="0 0 14 18"><path d="M6.5 8 L2.5 16" stroke="#d9a315" stroke-width="3" stroke-linecap="round"/><path d="M4 13 L6.5 14" stroke="#d9a315" stroke-width="1.5"/><circle cx="9" cy="5.5" r="4.3" fill="#f4c531" stroke="#c8920c" stroke-width="1"/></svg>ID<em>: int</em></p><p class=d>NODEID<em>: char(32)</em></p><p class=d>ITEMCODE<em>: varchar(50)</em></p><p class=d>DATETIME<em>: datetime</em></p><p>STANDARVALUE<em>: float(53)</em></p><p>RESULTVALUE<em>: float(53)</em></p><p>ABSOLUTEERROR<em>: float(53)</em></p><p>RELATIVEERROR<em>: float(53)</em></p><p>QCTYPE<em>: int</em></p>
</div></div>

<div class="t" style="left:597px;top:2433px;width:195px"><div class="h">STANDARD_CHECK_INFO</div><div class="b">
<p><svg class=k viewBox="0 0 14 18"><path d="M6.5 8 L2.5 16" stroke="#d9a315" stroke-width="3" stroke-linecap="round"/><path d="M4 13 L6.5 14" stroke="#d9a315" stroke-width="1.5"/><circle cx="9" cy="5.5" r="4.3" fill="#f4c531" stroke="#c8920c" stroke-width="1"/></svg>ID<em>: int</em></p><p class=d>MNCODE<em>: varchar(40)</em></p><p class=d>DATETIME<em>: datetime2(6)</em></p><p class=d>CODE<em>: varchar(100)</em></p><p>CHECKVALUE<em>: float(53)</em></p><p>STANDARDVALUE<em>: float(53)</em></p><p>DEVIATION<em>: float(53)</em></p><p>CHECKFLAG<em>: varchar(10)</em></p>
</div></div>

<div class="t" style="left:868px;top:2433px;width:265px"><div class="h">AQMS_AQI_TARGET</div><div class="b">
<p><svg class=k viewBox="0 0 14 18"><path d="M6.5 8 L2.5 16" stroke="#d9a315" stroke-width="3" stroke-linecap="round"/><path d="M4 13 L6.5 14" stroke="#d9a315" stroke-width="1.5"/><circle cx="9" cy="5.5" r="4.3" fill="#f4c531" stroke="#c8920c" stroke-width="1"/></svg>ID<em>: int</em></p><p>CREATETIMESTAMP<em>: datetime2(6)</em></p><p>LASTCHANGETIMESTAMP<em>: datetime2(6)</em></p><p>DESCRIPTION<em>: varchar(255)</em></p><p>TYPE<em>: varchar(255)</em></p><p>TARGETVALUE<em>: varchar(255)</em></p><p>TARGETDATE<em>: varchar(255)</em></p>
</div></div>

<div class="t" style="left:1213px;top:2433px;width:194px"><div class="h">WMS_DAILYOPERATION</div><div class="b">
<p><svg class=k viewBox="0 0 14 18"><path d="M6.5 8 L2.5 16" stroke="#d9a315" stroke-width="3" stroke-linecap="round"/><path d="M4 13 L6.5 14" stroke="#d9a315" stroke-width="1.5"/><circle cx="9" cy="5.5" r="4.3" fill="#f4c531" stroke="#c8920c" stroke-width="1"/></svg>ID<em>: varchar(32)</em></p><p>OPERATOR<em>: varchar(100)</em></p><p>NODEID<em>: varchar(32)</em></p><p>OPERATIONTIME<em>: datetime</em></p><p>SITUATION<em>: varchar(255)</em></p><p>IP<em>: varchar(50)</em></p><p>DETAILID<em>: varchar(32)</em></p>
</div></div>

<div class="t" style="left:1486px;top:2433px;width:215px"><div class="h">WMS_MAINTAIN_RECORD</div><div class="b">
<p><svg class=k viewBox="0 0 14 18"><path d="M6.5 8 L2.5 16" stroke="#d9a315" stroke-width="3" stroke-linecap="round"/><path d="M4 13 L6.5 14" stroke="#d9a315" stroke-width="1.5"/><circle cx="9" cy="5.5" r="4.3" fill="#f4c531" stroke="#c8920c" stroke-width="1"/></svg>ID<em>: int</em></p><p class=d>NODEID<em>: char(32)</em></p><p>THEME<em>: varchar(500)</em></p><p class=d>MAINTAINDATETIME<em>: datetime</em></p><p>MAINTAINMAN<em>: varchar(100)</em></p><p>CONTENT<em>: varchar(2000)</em></p><p>RECORDTYPE<em>: int</em></p>
</div></div>

<div class="t" style="left:1777px;top:2433px;width:186px"><div class="h">INSTRUMENT_LOG</div><div class="b">
<p><svg class=k viewBox="0 0 14 18"><path d="M6.5 8 L2.5 16" stroke="#d9a315" stroke-width="3" stroke-linecap="round"/><path d="M4 13 L6.5 14" stroke="#d9a315" stroke-width="1.5"/><circle cx="9" cy="5.5" r="4.3" fill="#f4c531" stroke="#c8920c" stroke-width="1"/></svg>ID<em>: int</em></p><p class=d>MNCODE<em>: varchar(40)</em></p><p>MONITORTYPE<em>: varchar(4)</em></p><p class=d>DATETIME<em>: datetime2(6)</em></p><p class=d>CODE<em>: varchar(50)</em></p><p>STATUS<em>: varchar(255)</em></p>
</div></div>

<div class="t" style="left:2038px;top:2433px;width:195px"><div class="h">SITE_ONLINE_RECORD</div><div class="b">
<p>NODEID<em>: varchar(32)</em></p><p>DATETIME<em>: datetime2(6)</em></p><p>MONITORTYPE<em>: varchar(50)</em></p><p><svg class=k viewBox="0 0 14 18"><path d="M6.5 8 L2.5 16" stroke="#d9a315" stroke-width="3" stroke-linecap="round"/><path d="M4 13 L6.5 14" stroke="#d9a315" stroke-width="1.5"/><circle cx="9" cy="5.5" r="4.3" fill="#f4c531" stroke="#c8920c" stroke-width="1"/></svg>ID<em>: int</em></p>
</div></div>

<div class="t" style="left:2310px;top:2433px;width:142px;height:74px"><div class="h">C3P0TESTTABLE</div><div class="b">
<p>a<em>: char(1)</em></p>
</div></div>

<div class="t" style="left:2531px;top:2433px;width:142px;height:74px"><div class="h">true</div><div class="b">
<p>a<em>: char(1)</em></p>
</div></div>

</body></html>
